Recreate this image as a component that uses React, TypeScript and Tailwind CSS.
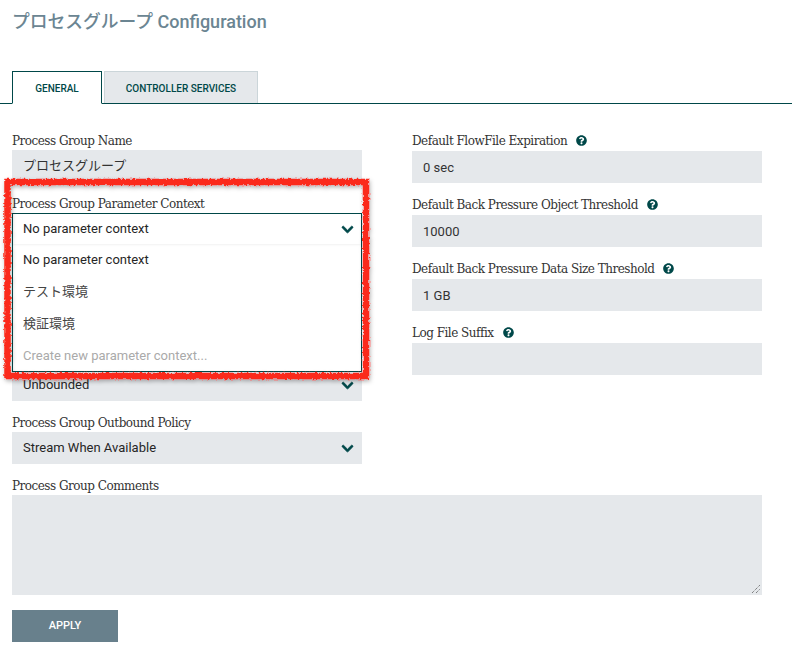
import { FaChevronDown, FaQuestionCircle } from 'react-icons/fa';

const sans = 'font-["Roboto","Noto_Sans_CJK_JP",sans-serif]';

function Label({ text, help }: { text: string; help?: boolean }) {
  return (
    <div className='flex items-center h-[17px] font-["DejaVu_Serif",serif] text-[12px] tracking-[-0.5px] text-[#333]'>
      <span>{text}</span>
      {help && <FaQuestionCircle className="ml-[9px] text-[#004849]" size={11} />}
    </div>
  );
}

function Chevron() {
  return <FaChevronDown className="text-[#004849]" size={13} stroke="currentColor" strokeWidth={30} />;
}

function Field({ value, className }: { value?: string; className?: string }) {
  return (
    <div className={`flex items-center h-[32px] w-[350px] px-[11px] bg-[#e5e8eb] text-[13px] text-[#333] ${className ?? ''}`}>
      {value}
    </div>
  );
}

function Select({ value, className }: { value: string; className?: string }) {
  return (
    <div className={`flex items-center justify-between h-[32px] w-[350px] pl-[11px] pr-[8px] bg-[#e5e8eb] text-[13px] text-[#262626] ${className ?? ''}`}>
      {value}
      <Chevron />
    </div>
  );
}

export default function App() {
  return (
    <div className={`relative h-[661px] w-[792px] overflow-hidden bg-white ${sans}`}>
      <h1 className="pl-[12px] pt-[11px] h-[71px] text-[18px] leading-[22px] font-medium text-[#6b8592]">
        <span className="text-[17.75px]">プロセスグループ</span> Configuration
      </h1>

      <div className="flex items-end h-[33px] pl-[12px] border-b border-[#004849]">
        <div className="flex items-center justify-center w-[90px] h-[33px] -mb-px pt-[1px] bg-white border border-[#004849] border-b-white text-[10px] font-medium text-[#004849]">
          GENERAL
        </div>
        <div className="flex items-center justify-center w-[154px] h-[32px] ml-[2px] pt-[2px] bg-[#e5e8eb] border border-[#cbd5d9] border-b-0 text-[10px] font-medium text-[#004849]">
          CONTROLLER SERVICES
        </div>
      </div>

      <div className="flex pl-[12px] pt-[28px]">
        <div className="w-[350px]">
          <Label text="Process Group Name" />
          <Field value="プロセスグループ" className="mt-[1px]" />
          <div className="mt-[13px]">
            <Label text="Process Group Parameter Context" />
          </div>
          <Select value="Unbounded" className="mt-[157px]" />
          <div className="mt-[13px]">
            <Label text="Process Group Outbound Policy" />
          </div>
          <Select value="Stream When Available" className="mt-[1px]" />
        </div>

        <div className="w-[350px] ml-[50px]">
          <Label text="Default FlowFile Expiration" help />
          <Field value="0 sec" className="mt-[2px] pt-[1px]" />
          <div className="mt-[13px]"><Label text="Default Back Pressure Object Threshold" help /></div>
          <Field value="10000" className="mt-[2px] pt-[1px]" />
          <div className="mt-[13px]"><Label text="Default Back Pressure Data Size Threshold" help /></div>
          <Field value="1 GB" className="mt-[2px] pt-[1px]" />
          <div className="mt-[13px]"><Label text="Log File Suffix" help /></div>
          <Field className="mt-[2px]" />
        </div>
      </div>

      <div className="pl-[12px] mt-[13px]">
        <Label text="Process Group Comments" />
        <div className="relative mt-[1px] h-[100px] w-[750px] bg-[#e5e8eb]">
          <svg className="absolute right-[1px] bottom-[1px]" width="10" height="10" viewBox="0 0 10 10">
            <path d="M1 9 L9 1 M5 9 L9 5" stroke="#555" strokeWidth="1" strokeDasharray="1 1" />
          </svg>
        </div>
        <button className="mt-[15px] flex items-center justify-center h-[32px] w-[106px] bg-[#68808c] text-[11px] font-medium text-white">
          APPLY
        </button>
      </div>

      {/* open dropdown */}
      <div className="absolute left-[12px] top-[213px] w-[350px] h-[159px] bg-white border border-[#004849] text-[13px] text-[#262626]">
        <div className="flex items-center justify-between h-[30px] pl-[10px] pr-[7px] shadow-[0_1px_2px_rgba(0,0,0,0.06)]">
          No parameter context
          <Chevron />
        </div>
        <div className="flex items-center h-[32px] pl-[10px]">No parameter context</div>
        <div className="flex items-center h-[32px] pl-[10px] text-[#444]">テスト環境</div>
        <div className="flex items-center h-[32px] pl-[10px] pb-[1px] text-[#444]">検証環境</div>
        <div className="flex items-center h-[32px] pl-[10px] text-[#aaa]">Create new parameter context...</div>
      </div>

      {/* hand drawn highlight */}
      <svg className="absolute left-0 top-[170px]" width="400" height="230" viewBox="0 170 400 230">
        <defs>
          <filter id="rough" x="-5%" y="-5%" width="110%" height="110%">
            <feTurbulence type="fractalNoise" baseFrequency="0.4" numOctaves="2" seed="4" />
            <feDisplacementMap in="SourceGraphic" scale="4" xChannelSelector="R" yChannelSelector="G" />
            <feDropShadow dx="1" dy="2" stdDeviation="2" floodColor="#000" floodOpacity="0.3" />
          </filter>
        </defs>
        <rect x="7.5" y="182" width="358.5" height="194" fill="none" stroke="#fb2b1e" strokeWidth="6.5" filter="url(#rough)" />
      </svg>
    </div>
  );
}
